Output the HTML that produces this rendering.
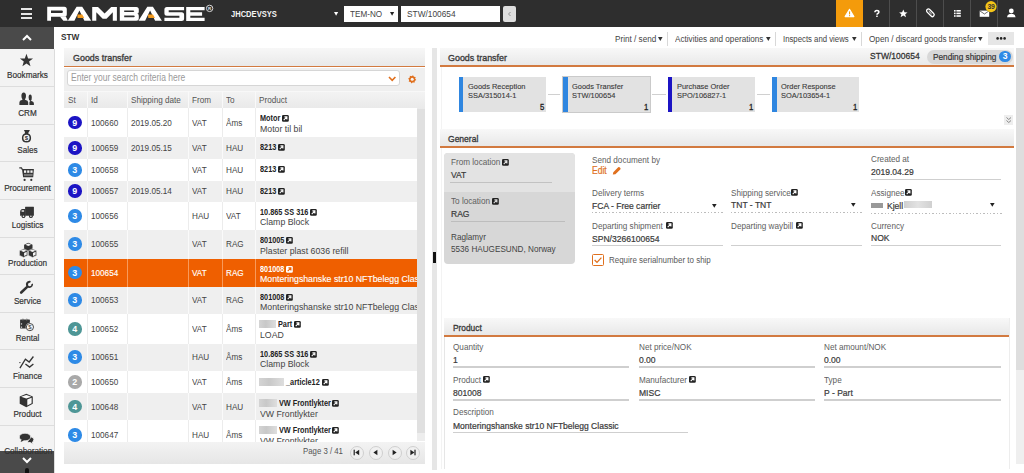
<!DOCTYPE html>
<html><head><meta charset="utf-8">
<style>
*{box-sizing:border-box;margin:0;padding:0}
html,body{width:1024px;height:473px;overflow:hidden;background:#fff;font-family:"Liberation Sans",sans-serif;font-size:9.6px;color:#333}
.a{position:absolute}
.t{position:absolute;white-space:nowrap;line-height:1}
svg{position:absolute;overflow:visible}
</style></head><body>

<div class="a" style="left:0px;top:0px;width:1024px;height:27px;background:#2e2e2e;"></div>
<div class="a" style="left:21px;top:8px;width:11px;height:2px;background:#e6e6e6;"></div>
<div class="a" style="left:21px;top:12.5px;width:11px;height:2px;background:#e6e6e6;"></div>
<div class="a" style="left:21px;top:17px;width:11px;height:2px;background:#e6e6e6;"></div>
<svg width="1024" height="27" style="left:0;top:0">
 <g fill="#fff" fill-rule="evenodd">
  <path d="M47.2,6.8 H64.3 Q66.8,6.8 66.8,9.3 V14.2 Q66.8,16.7 64.3,16.7 H51 V20.8 H47.2 Z M51,10.6 H61.8 Q62.9,10.6 62.9,11.85 Q62.9,13.1 61.8,13.1 H51 Z"/>
  <path d="M59.8,16.5 H65.8 L67.9,20.8 H63.4 Z"/>
  <path d="M67.8,20.8 L76.6,6.8 H82.2 L91.2,20.8 H84.4 L79.4,10.4 L74.4,20.8 Z"/>
  <path d="M92.2,6.9 H98 L104.6,13.6 L111.2,6.9 H116.9 V20.8 H112.8 V12.2 L106.5,18.8 H102.7 L96.3,12.2 V20.8 H92.2 Z"/>
  <path d="M119.8,6.9 H136.3 Q138.8,6.9 138.8,9.4 V11.8 Q138.8,13.8 137.3,13.85 Q138.8,13.9 138.8,15.8 V18.3 Q138.8,20.8 136.3,20.8 H119.8 Z M124.2,10.6 H133.2 Q134.2,10.6 134.2,11.35 Q134.2,12.1 133.2,12.1 H124.2 Z M124.2,15.5 H133.7 Q134.7,15.5 134.7,16.35 Q134.7,17.2 133.7,17.2 H124.2 Z"/>
  <path d="M138.5,20.8 L147.3,6.8 H152.9 L161.9,20.8 H155.1 L150.1,10.4 L145.1,20.8 Z"/>
  <path d="M166.9,7 H184.1 V10.3 H168.7 V12.2 H181.6 Q184.1,12.2 184.1,14.7 V18.5 Q184.1,21 181.6,21 H164.4 V17.7 H179.4 V15.8 H166.9 Q164.4,15.8 164.4,13.3 V9.5 Q164.4,7 166.9,7 Z"/>
  <path d="M186.2,7 H204.6 V10.3 H190.3 V12.2 H202.1 V15.7 H190.3 V17.7 H204.6 V21 H186.2 Z"/>
 </g>
 <polygon points="77.3,14.4 82.3,14.4 84.2,17.9 77.6,17.9" fill="#f39a1e"/>
 <polygon points="148,14.4 153,14.4 154.9,17.9 148.3,17.9" fill="#f39a1e"/>
 <circle cx="209.6" cy="8.4" r="3.2" fill="none" stroke="#e8e8e8" stroke-width="0.9"/>
 <text x="208.1" y="10" font-size="4.4" fill="#e8e8e8" font-family="Liberation Sans" font-weight="bold">R</text>
</svg>
<div class="t" style="left:231px;top:10.11px;font-size:9px;color:#f4f4f4;font-weight:bold;transform-origin:0 0;transform:scaleX(0.84);">JHCDEVSYS</div>
<svg width="5.2" height="4.8" style="left:333.5px;top:12px"><path d="M0,0 H4.2 L2.1,3.8 Z" fill="#fff"/></svg>
<div class="a" style="left:344.4px;top:6.2px;width:53.3px;height:15.7px;background:#fff;"></div>
<div class="t" style="left:350.3px;top:9.10px;font-size:9.6px;color:#444;transform-origin:0 0;transform:scaleX(0.85);">TEM-NO</div>
<svg width="5.2" height="4.8" style="left:389.8px;top:12px"><path d="M0,0 H4.2 L2.1,3.8 Z" fill="#222"/></svg>
<div class="a" style="left:401px;top:6.2px;width:98.7px;height:15.7px;background:#fff;"></div>
<div class="t" style="left:407px;top:9.00px;font-size:9.8px;color:#444;transform-origin:0 0;transform:scaleX(0.85);">STW/100654</div>
<div class="a" style="left:503.2px;top:6.2px;width:12.7px;height:15.7px;background:#dedede;border-radius:2px"></div>
<svg width="10" height="10" style="left:505px;top:9px"><path d="M5.5,3 L3.5,5 L5.5,7" stroke="#888" stroke-width="0.9" fill="none"/></svg>
<div class="a" style="left:835.7px;top:0px;width:27px;height:27px;background:#f49b0b;"></div>
<div class="a" style="left:888.8px;top:0px;width:1px;height:27px;background:#4d4d4d;"></div>
<div class="a" style="left:915.7px;top:0px;width:1px;height:27px;background:#4d4d4d;"></div>
<div class="a" style="left:942.8px;top:0px;width:1px;height:27px;background:#4d4d4d;"></div>
<div class="a" style="left:969.7px;top:0px;width:1px;height:27px;background:#4d4d4d;"></div>
<div class="a" style="left:997.2px;top:0px;width:1px;height:27px;background:#4d4d4d;"></div>
<svg width="1024" height="27" style="left:0;top:0">
 <path d="M849.5,9.3 L853.9,16.6 H845.1 Z" fill="#fff" stroke="#fff" stroke-width="1.1" stroke-linejoin="round"/>
 <rect x="849" y="11.4" width="1.1" height="3" fill="#f49b0b"/>
 <rect x="849" y="15.1" width="1.1" height="1.1" fill="#f49b0b"/>
 <path d="M874.9,12.2 Q874.9,10.4 876.9,10.4 Q878.9,10.4 878.9,12 Q878.9,13 877.8,13.5 Q877,13.9 877,14.8" fill="none" stroke="#fff" stroke-width="1.5"/>
 <rect x="876.2" y="15.6" width="1.5" height="1.4" fill="#fff"/>
 <path d="M903.3,9.4 L904.5,12.2 L907.5,12.4 L905.2,14.3 L906,17.2 L903.3,15.6 L900.6,17.2 L901.4,14.3 L899.1,12.4 L902.1,12.2 Z" fill="#fff"/>
 <g transform="rotate(-45 930.4 12.8)"><rect x="928.6" y="8.2" width="3.6" height="9.2" rx="1.8" fill="none" stroke="#fff" stroke-width="1.3"/><line x1="930.4" y1="10.4" x2="930.4" y2="14.6" stroke="#fff" stroke-width="0.9"/></g>
 <g fill="#fff"><rect x="954" y="10" width="1.6" height="1.6"/><rect x="956.4" y="10" width="4.4" height="1.6"/><rect x="954" y="12.6" width="1.6" height="1.6"/><rect x="956.4" y="12.6" width="4.4" height="1.6"/><rect x="954" y="15.2" width="1.6" height="1.6"/><rect x="956.4" y="15.2" width="4.4" height="1.6"/></g>
 <rect x="979.7" y="10.6" width="9.5" height="6.2" fill="#fff"/>
 <path d="M979.7,10.8 L984.45,14 L989.2,10.8" fill="none" stroke="#2e2e2e" stroke-width="0.7"/>
 <circle cx="991" cy="6.6" r="5.6" fill="#f5c518"/>
 <text x="987.6" y="9.1" font-size="6.8" font-weight="bold" fill="#333" font-family="Liberation Sans" letter-spacing="-0.3">39</text>
 <circle cx="1011.3" cy="11" r="2.4" fill="#fff"/>
 <path d="M1007,17.2 Q1007.3,14.2 1009.6,13.9 H1013 Q1015.3,14.2 1015.6,17.2 Z" fill="#fff"/>
</svg>
<div class="a" style="left:0px;top:27px;width:54px;height:21.5px;background:#4a4a4a;"></div>
<svg width="10" height="6" style="left:22px;top:34.5px"><path d="M1,5 L5,1 L9,5" fill="none" stroke="#fff" stroke-width="2"/></svg>
<div class="a" style="left:0px;top:48.5px;width:54px;height:403px;background:#f3f3f3;"></div>
<div class="a" style="left:54px;top:48.5px;width:1px;height:425px;background:#dcdcdc;"></div>
<div class="a" style="left:0px;top:450.5px;width:54px;height:23px;background:#4a4a4a;"></div>
<div class="a" style="left:0px;top:86.0px;width:54px;height:1px;background:#dddddd;"></div>
<svg width="20" height="20" style="left:17px;top:50.4px"><g transform="translate(10,10)" fill="#333" font-family="Liberation Sans"><path d="M-0.55,-6.20 L1.10,-1.57 L6.01,-1.43 L2.11,1.57 L3.51,6.28 L-0.55,3.50 L-4.61,6.28 L-3.21,1.57 L-7.11,-1.43 L-2.20,-1.57 Z"/></g></svg>
<div class="t" style="left:0px;top:69.97px;font-size:9.6px;color:#333;-webkit-text-stroke:0.2px #333;width:55px;text-align:center;transform-origin:50% 0;transform:scaleX(0.85);">Bookmarks</div>
<div class="a" style="left:0px;top:123.63px;width:54px;height:1px;background:#dddddd;"></div>
<svg width="20" height="20" style="left:17px;top:88.0px"><g transform="translate(10,10)" fill="#333" font-family="Liberation Sans"><path d="M-7.6,7.1 V4.6 Q-7.6,2.3 -5.2,2 L-4.4,1.6 Q-5.6,0.4 -5.6,-2 Q-5.6,-5.6 -3.3,-5.6 Q-1,-5.6 -1,-2 Q-1,0.4 -2.2,1.6 L-1.4,2 Q1.2,2.3 1.2,4.6 V7.1 Z"/><path d="M2.4,7.1 V4.4 Q2.4,3.4 3.4,3 Q1.6,2.4 1.6,-0.6 Q1.6,-3.6 3.2,-3.6 Q4.8,-3.6 4.8,-0.6 Q4.8,2.2 3.8,2.8 L5,3.3 Q6.9,3.8 6.9,5.4 V7.1 Z"/></g></svg>
<div class="t" style="left:0px;top:107.60px;font-size:9.6px;color:#333;-webkit-text-stroke:0.2px #333;width:55px;text-align:center;transform-origin:50% 0;transform:scaleX(0.85);">CRM</div>
<div class="a" style="left:0px;top:161.26px;width:54px;height:1px;background:#dddddd;"></div>
<svg width="20" height="20" style="left:17px;top:125.6px"><g transform="translate(10,10)" fill="#333" font-family="Liberation Sans"><path d="M-3.1,-6 H2.9 L2,-4.2 L1,-2.7 Q4.1,-1.4 4.1,2 Q4.1,6.5 -0.5,6.5 Q-5.1,6.5 -5.1,2 Q-5.1,-1.4 -2,-2.7 L-2.2,-4.2 Z"/><circle cx="-0.5" cy="1.9" r="3.1" fill="#f3f3f3"/><text x="-2.25" y="4.1" font-size="6" font-weight="bold" fill="#333">$</text></g></svg>
<div class="t" style="left:0px;top:145.23px;font-size:9.6px;color:#333;-webkit-text-stroke:0.2px #333;width:55px;text-align:center;transform-origin:50% 0;transform:scaleX(0.85);">Sales</div>
<div class="a" style="left:0px;top:198.89px;width:54px;height:1px;background:#dddddd;"></div>
<svg width="20" height="20" style="left:17px;top:163.3px"><g transform="translate(10,10)" fill="#333" font-family="Liberation Sans"><path d="M-7.7,-5.2 H-5.6 L-4.6,-3.4" fill="none" stroke="#333" stroke-width="1.2"/><path d="M-5,-3.9 H6.9 L6.2,4.2 H-3.9 Z"/><g fill="#f3f3f3"><rect x="-3" y="-2.6" width="2.2" height="2.4"/><rect x="0.2" y="-2.6" width="2.2" height="2.4"/><rect x="3.4" y="-2.6" width="2.2" height="2.4"/></g><rect x="-3" y="0.9" width="8.6" height="2.2" fill="#777"/><circle cx="-2.4" cy="6.9" r="1.1"/><circle cx="4.3" cy="6.9" r="1.1"/></g></svg>
<div class="t" style="left:0px;top:182.86px;font-size:9.6px;color:#333;-webkit-text-stroke:0.2px #333;width:55px;text-align:center;transform-origin:50% 0;transform:scaleX(0.85);">Procurement</div>
<div class="a" style="left:0px;top:236.52px;width:54px;height:1px;background:#dddddd;"></div>
<svg width="20" height="20" style="left:17px;top:200.9px"><g transform="translate(10,10)" fill="#333" font-family="Liberation Sans"><rect x="-1.9" y="-4.3" width="8.8" height="9.1" rx="0.4"/><path d="M-1.6,-1.9 H-4.4 Q-6.9,-1.6 -6.9,1.2 V4.8 H-1.6 Z"/><rect x="-5.4" y="-0.7" width="2.5" height="1.4" fill="#f3f3f3"/><circle cx="-3.5" cy="5.2" r="1.9"/><circle cx="3.9" cy="5.2" r="1.9"/><circle cx="-3.5" cy="5.2" r="0.8" fill="#f3f3f3"/><circle cx="3.9" cy="5.2" r="0.8" fill="#f3f3f3"/></g></svg>
<div class="t" style="left:0px;top:220.49px;font-size:9.6px;color:#333;-webkit-text-stroke:0.2px #333;width:55px;text-align:center;transform-origin:50% 0;transform:scaleX(0.85);">Logistics</div>
<div class="a" style="left:0px;top:274.15px;width:54px;height:1px;background:#dddddd;"></div>
<svg width="20" height="20" style="left:17px;top:238.5px"><g transform="translate(10,10)" fill="#333" font-family="Liberation Sans"><g transform="translate(0.3,0)"><path d="M1,-6.3 L5.2,-4.3 V0.6 L1,2.6 L-3.2,0.6 V-4.3 Z"/><path d="M-3.7,-0.2 L0.5,1.8 V6.4 L-3.7,8.4 L-7.9,6.4 V1.8 Z" stroke="#f3f3f3" stroke-width="0.6"/><path d="M5.2,-0.2 L9.4,1.8 V6.4 L5.2,8.4 L1,6.4 V1.8 Z" stroke="#f3f3f3" stroke-width="0.6"/><g fill="#f3f3f3"><path d="M-1.9,-4.3 L1,-5.6 L3.9,-4.3 L1,-3 Z"/><path d="M-6.6,1.8 L-3.7,0.5 L-0.8,1.8 L-3.7,3.1 Z"/><path d="M2.3,1.8 L5.2,0.5 L8.1,1.8 L5.2,3.1 Z"/><path d="M-3.2,4 L-0.6,2.8 V5.8 L-3.2,7 Z"/><path d="M5.7,4 L8.3,2.8 V5.8 L5.7,7 Z"/></g></g></g></svg>
<div class="t" style="left:0px;top:258.12px;font-size:9.6px;color:#333;-webkit-text-stroke:0.2px #333;width:55px;text-align:center;transform-origin:50% 0;transform:scaleX(0.85);">Production</div>
<div class="a" style="left:0px;top:311.78px;width:54px;height:1px;background:#dddddd;"></div>
<svg width="20" height="20" style="left:17px;top:276.2px"><g transform="translate(10,10)" fill="#333" font-family="Liberation Sans"><path d="M-5.8,6.5 L-0.6,1.6" stroke="#333" stroke-width="2.6" stroke-linecap="round" fill="none"/><path d="M-0.6,1.6 L0.8,0.2" stroke="#333" stroke-width="2" fill="none"/><path d="M6,-2.4 A3.6,3.6 0 1 1 3.8,-5 L3.2,-3.2 A1.7,1.7 0 1 0 4.4,-1.8 Z"/></g></svg>
<div class="t" style="left:0px;top:295.75px;font-size:9.6px;color:#333;-webkit-text-stroke:0.2px #333;width:55px;text-align:center;transform-origin:50% 0;transform:scaleX(0.85);">Service</div>
<div class="a" style="left:0px;top:349.41px;width:54px;height:1px;background:#dddddd;"></div>
<svg width="20" height="20" style="left:17px;top:313.8px"><g transform="translate(10,10)" fill="#333" font-family="Liberation Sans"><rect x="-6.9" y="-4.4" width="9.8" height="8.8" rx="0.5"/><rect x="-4.7" y="-5.2" width="1.2" height="1.6" fill="#333"/><rect x="-0.9" y="-5.2" width="1.2" height="1.6" fill="#333"/><g fill="#f3f3f3"><rect x="-4.5" y="-4.6" width="0.8" height="0.8"/><rect x="-0.7" y="-4.6" width="0.8" height="0.8"/><rect x="-6.1" y="-0.6" width="1.2" height="1.1"/><rect x="-6.1" y="2.6" width="1.2" height="1.1"/></g><circle cx="2.9" cy="3.1" r="4.3" fill="#f3f3f3"/><circle cx="2.9" cy="3.1" r="3.6" fill="#fafafa" stroke="#333" stroke-width="0.9"/><text x="1.3" y="5.3" font-size="6" fill="#333">$</text></g></svg>
<div class="t" style="left:0px;top:333.38px;font-size:9.6px;color:#333;-webkit-text-stroke:0.2px #333;width:55px;text-align:center;transform-origin:50% 0;transform:scaleX(0.85);">Rental</div>
<div class="a" style="left:0px;top:387.04px;width:54px;height:1px;background:#dddddd;"></div>
<svg width="20" height="20" style="left:17px;top:351.4px"><g transform="translate(10,10)" fill="#333" font-family="Liberation Sans"><path d="M-7.1,7.1 L-1.6,-1.8 L2.2,1 L6.4,-4.5" fill="none" stroke="#333" stroke-width="1.3"/><path d="M-1.6,2.9 L2.6,6.1 L6.4,2.9" fill="none" stroke="#333" stroke-width="1.3"/><circle cx="-7.1" cy="1.6" r="0.7"/></g></svg>
<div class="t" style="left:0px;top:371.01px;font-size:9.6px;color:#333;-webkit-text-stroke:0.2px #333;width:55px;text-align:center;transform-origin:50% 0;transform:scaleX(0.85);">Finance</div>
<div class="a" style="left:0px;top:424.67px;width:54px;height:1px;background:#dddddd;"></div>
<svg width="20" height="20" style="left:17px;top:389.0px"><g transform="translate(10,10)" fill="#333" font-family="Liberation Sans"><path d="M-0.7,-5.2 L5.8,-2.4 V4.8 L-0.7,8.2 L-7.3,4.8 V-2.4 Z"/><path d="M-0.7,-3.9 L4.4,-2.3 L-0.7,-0.4 L-5.9,-2.3 Z" fill="#fafafa"/><path d="M0.3,0.6 L4.6,-1.2 V4.2 L0.3,6.4 Z" fill="#fafafa"/></g></svg>
<div class="t" style="left:0px;top:408.64px;font-size:9.6px;color:#333;-webkit-text-stroke:0.2px #333;width:55px;text-align:center;transform-origin:50% 0;transform:scaleX(0.85);">Product</div>
<svg width="20" height="20" style="left:17px;top:426.7px"><g transform="translate(10,10)" fill="#333" font-family="Liberation Sans"><path d="M3.2,-0.4 Q6.9,0.2 6.9,2.6 Q6.9,4.2 5.4,5 L6.2,7.2 L3.4,5.6 Q1.4,5.6 0.4,5 Z" stroke="#f3f3f3" stroke-width="0.9"/><ellipse cx="-2" cy="0.05" rx="5.7" ry="3.8" stroke="#f3f3f3" stroke-width="0.7"/><path d="M-5.4,2.6 L-6.4,5 L-3,3.6 Z"/></g></svg>
<div class="t" style="left:0px;top:446.27px;font-size:9.6px;color:#333;-webkit-text-stroke:0.2px #333;width:55px;text-align:center;transform-origin:50% 0;transform:scaleX(0.85);">Collaboration</div>
<svg width="10" height="6" style="left:22px;top:457px"><path d="M1,1 L5,5 L9,1" fill="none" stroke="#fff" stroke-width="2"/></svg>
<div class="a" style="left:25px;top:468px;width:4px;height:5px;background:#111;border-radius:2px 2px 0 0"></div>
<div class="t" style="left:61px;top:32.86px;font-size:8.9px;color:#333;font-weight:bold;transform-origin:0 0;transform:scaleX(0.93);">STW</div>
<div class="t" style="left:614.6px;top:34.10px;font-size:9.6px;color:#444;transform-origin:0 0;transform:scaleX(0.85);">Print / send</div>
<svg width="5.6" height="5" style="left:658.4px;top:37.2px"><path d="M0,0 H4.6 L2.3,4 Z" fill="#333"/></svg>
<div class="a" style="left:667.2px;top:32.4px;width:1px;height:14px;background:#d8d8d8;"></div>
<div class="t" style="left:675.2px;top:34.10px;font-size:9.6px;color:#444;transform-origin:0 0;transform:scaleX(0.85);">Activities and operations</div>
<svg width="5.6" height="5" style="left:765.8px;top:37.2px"><path d="M0,0 H4.6 L2.3,4 Z" fill="#333"/></svg>
<div class="a" style="left:775.2px;top:32.4px;width:1px;height:14px;background:#d8d8d8;"></div>
<div class="t" style="left:782.6px;top:34.10px;font-size:9.6px;color:#444;transform-origin:0 0;transform:scaleX(0.81);">Inspects and views</div>
<svg width="5.6" height="5" style="left:851.8px;top:37.2px"><path d="M0,0 H4.6 L2.3,4 Z" fill="#333"/></svg>
<div class="a" style="left:860.8px;top:32.4px;width:1px;height:14px;background:#d8d8d8;"></div>
<div class="t" style="left:868.5px;top:34.10px;font-size:9.6px;color:#444;transform-origin:0 0;transform:scaleX(0.85);">Open / discard goods transfer</div>
<svg width="5.6" height="5" style="left:978.3px;top:37.2px"><path d="M0,0 H4.6 L2.3,4 Z" fill="#333"/></svg>
<div class="a" style="left:988.1px;top:32.1px;width:26.3px;height:12.5px;background:#e6e6e6;"></div>
<svg width="30" height="10" style="left:988px;top:34px"><circle cx="9.6" cy="4.4" r="1.3" fill="#222"/><circle cx="13.1" cy="4.4" r="1.3" fill="#222"/><circle cx="16.6" cy="4.4" r="1.3" fill="#222"/></svg>
<div class="a" style="left:64px;top:48px;width:361px;height:18.2px;background:linear-gradient(#f7f7f7,#e9e9e9);"></div>
<div class="t" style="left:73px;top:53.05px;font-size:9.7px;color:#3a3a3a;-webkit-text-stroke:0.35px #3a3a3a;transform-origin:0 0;transform:scaleX(0.92);">Goods transfer</div>
<div class="a" style="left:64px;top:65.6px;width:361px;height:1.8px;background:#d27a40;"></div>
<div class="a" style="left:64px;top:67.5px;width:361px;height:23.5px;background:#efefef;"></div>
<div class="a" style="left:67px;top:69.6px;width:333px;height:16.9px;background:#fff;border:1px solid #d6d6d6;border-radius:3px"></div>
<div class="t" style="left:71px;top:73.10px;font-size:10px;color:#9a9a9a;transform-origin:0 0;transform:scaleX(0.85);">Enter your search criteria here</div>
<svg width="10" height="7" style="left:387.5px;top:76px"><path d="M1,1 L4.2,4.4 L7.4,1" fill="none" stroke="#e0701e" stroke-width="1.6"/></svg>
<svg width="1024" height="100" style="left:0;top:0"><polygon points="416.32,80.12 414.69,80.97 414.53,82.79 412.79,82.24 411.38,83.42 410.53,81.79 408.71,81.63 409.26,79.89 408.08,78.48 409.71,77.63 409.87,75.81 411.61,76.36 413.02,75.18 413.87,76.81 415.69,76.97 415.14,78.71" fill="#e0701e"/><circle cx="412.2" cy="79.3" r="2.9" fill="#e0701e"/><circle cx="412.2" cy="79.3" r="1.5" fill="#f4f4f4"/></svg>
<div class="a" style="left:64px;top:91px;width:361px;height:17.5px;background:linear-gradient(#f3f3f3,#e9e9e9);border-top:1px solid #f8f8f8"></div>
<div class="a" style="left:86.5px;top:91px;width:1px;height:17.5px;background:#f9f9f9;"></div>
<div class="a" style="left:127.0px;top:91px;width:1px;height:17.5px;background:#f9f9f9;"></div>
<div class="a" style="left:188.0px;top:91px;width:1px;height:17.5px;background:#f9f9f9;"></div>
<div class="a" style="left:222.0px;top:91px;width:1px;height:17.5px;background:#f9f9f9;"></div>
<div class="a" style="left:255.0px;top:91px;width:1px;height:17.5px;background:#f9f9f9;"></div>
<div class="t" style="left:67.7px;top:95.10px;font-size:9.6px;color:#555;transform-origin:0 0;transform:scaleX(0.85);">St</div>
<div class="t" style="left:90.5px;top:95.10px;font-size:9.6px;color:#555;transform-origin:0 0;transform:scaleX(0.85);">Id</div>
<div class="t" style="left:130.8px;top:95.10px;font-size:9.6px;color:#555;transform-origin:0 0;transform:scaleX(0.85);">Shipping date</div>
<div class="t" style="left:191.7px;top:95.10px;font-size:9.6px;color:#555;transform-origin:0 0;transform:scaleX(0.85);">From</div>
<div class="t" style="left:226px;top:95.10px;font-size:9.6px;color:#555;transform-origin:0 0;transform:scaleX(0.85);">To</div>
<div class="t" style="left:258.7px;top:95.10px;font-size:9.6px;color:#555;transform-origin:0 0;transform:scaleX(0.85);">Product</div>
<div class="a" style="left:64px;top:108px;width:353px;height:333.8px;overflow:hidden">
<div class="a" style="left:0px;top:0px;width:354px;height:29px;background:#ffffff;"></div>
<div class="a" style="left:22.5px;top:0px;width:1px;height:29px;background:#ececec;"></div>
<div class="a" style="left:63.0px;top:0px;width:1px;height:29px;background:#ececec;"></div>
<div class="a" style="left:124.0px;top:0px;width:1px;height:29px;background:#ececec;"></div>
<div class="a" style="left:158.0px;top:0px;width:1px;height:29px;background:#ececec;"></div>
<div class="a" style="left:191.0px;top:0px;width:1px;height:29px;background:#ececec;"></div>
<div class="a" style="left:4.1px;top:7.7px;width:13.6px;height:13.6px;background:#1c14c4;border-radius:50%;"></div>
<div class="t" style="left:4.1px;top:9.71px;font-size:9.4px;color:#fff;font-weight:bold;width:13.6px;text-align:center;transform-origin:50% 0;transform:scaleX(0.95);">9</div>
<div class="t" style="left:26.5px;top:9.60px;font-size:9.6px;color:#444;transform-origin:0 0;transform:scaleX(0.85);">100660</div>
<div class="t" style="left:66.80000000000001px;top:9.60px;font-size:9.6px;color:#444;transform-origin:0 0;transform:scaleX(0.85);">2019.05.20</div>
<div class="t" style="left:127.69999999999999px;top:9.60px;font-size:9.6px;color:#444;transform-origin:0 0;transform:scaleX(0.85);">VAT</div>
<div class="t" style="left:162px;top:9.60px;font-size:9.6px;color:#444;transform-origin:0 0;transform:scaleX(0.85);">Åms</div>
<div class="t" style="left:196px;top:6.11px;font-size:8.6px;color:#222;font-weight:bold;transform-origin:0 0;transform:scaleX(0.85);">Motor</div>
<svg width="8" height="8" style="left:218.1px;top:7.10px"><g transform="scale(1.000)"><rect x="0" y="0" width="6.8" height="6.8" rx="1.3" fill="#222"/><path d="M1.7,5.1 L4.7,2.1 M2.4,1.9 H4.9 V4.4" stroke="#ffffff" stroke-width="1.1" fill="none"/></g></svg>
<div class="t" style="left:196px;top:15.93px;font-size:9.95px;color:#444;transform-origin:0 0;transform:scaleX(0.88);">Motor til bil</div>
<div class="a" style="left:0px;top:29px;width:354px;height:21.5px;background:#efefef;"></div>
<div class="a" style="left:22.5px;top:29px;width:1px;height:21.5px;background:#fafafa;"></div>
<div class="a" style="left:63.0px;top:29px;width:1px;height:21.5px;background:#fafafa;"></div>
<div class="a" style="left:124.0px;top:29px;width:1px;height:21.5px;background:#fafafa;"></div>
<div class="a" style="left:158.0px;top:29px;width:1px;height:21.5px;background:#fafafa;"></div>
<div class="a" style="left:191.0px;top:29px;width:1px;height:21.5px;background:#fafafa;"></div>
<div class="a" style="left:4.1px;top:32.95px;width:13.6px;height:13.6px;background:#1c14c4;border-radius:50%;"></div>
<div class="t" style="left:4.1px;top:34.96px;font-size:9.4px;color:#fff;font-weight:bold;width:13.6px;text-align:center;transform-origin:50% 0;transform:scaleX(0.95);">9</div>
<div class="t" style="left:26.5px;top:34.85px;font-size:9.6px;color:#444;transform-origin:0 0;transform:scaleX(0.85);">100659</div>
<div class="t" style="left:66.80000000000001px;top:34.85px;font-size:9.6px;color:#444;transform-origin:0 0;transform:scaleX(0.85);">2019.05.15</div>
<div class="t" style="left:127.69999999999999px;top:34.85px;font-size:9.6px;color:#444;transform-origin:0 0;transform:scaleX(0.85);">VAT</div>
<div class="t" style="left:162px;top:34.85px;font-size:9.6px;color:#444;transform-origin:0 0;transform:scaleX(0.85);">HAU</div>
<div class="t" style="left:196px;top:35.36px;font-size:8.6px;color:#222;font-weight:bold;transform-origin:0 0;transform:scaleX(0.85);">8213</div>
<svg width="8" height="8" style="left:214.06px;top:36.35px"><g transform="scale(1.000)"><rect x="0" y="0" width="6.8" height="6.8" rx="1.3" fill="#222"/><path d="M1.7,5.1 L4.7,2.1 M2.4,1.9 H4.9 V4.4" stroke="#efefef" stroke-width="1.1" fill="none"/></g></svg>
<div class="a" style="left:0px;top:50.5px;width:354px;height:22.5px;background:#ffffff;"></div>
<div class="a" style="left:22.5px;top:50.5px;width:1px;height:22.5px;background:#ececec;"></div>
<div class="a" style="left:63.0px;top:50.5px;width:1px;height:22.5px;background:#ececec;"></div>
<div class="a" style="left:124.0px;top:50.5px;width:1px;height:22.5px;background:#ececec;"></div>
<div class="a" style="left:158.0px;top:50.5px;width:1px;height:22.5px;background:#ececec;"></div>
<div class="a" style="left:191.0px;top:50.5px;width:1px;height:22.5px;background:#ececec;"></div>
<div class="a" style="left:4.1px;top:54.95px;width:13.6px;height:13.6px;background:#2e8ae6;border-radius:50%;"></div>
<div class="t" style="left:4.1px;top:56.96px;font-size:9.4px;color:#fff;font-weight:bold;width:13.6px;text-align:center;transform-origin:50% 0;transform:scaleX(0.95);">3</div>
<div class="t" style="left:26.5px;top:56.85px;font-size:9.6px;color:#444;transform-origin:0 0;transform:scaleX(0.85);">100658</div>
<div class="t" style="left:127.69999999999999px;top:56.85px;font-size:9.6px;color:#444;transform-origin:0 0;transform:scaleX(0.85);">VAT</div>
<div class="t" style="left:162px;top:56.85px;font-size:9.6px;color:#444;transform-origin:0 0;transform:scaleX(0.85);">HAU</div>
<div class="t" style="left:196px;top:57.36px;font-size:8.6px;color:#222;font-weight:bold;transform-origin:0 0;transform:scaleX(0.85);">8213</div>
<svg width="8" height="8" style="left:214.06px;top:58.35px"><g transform="scale(1.000)"><rect x="0" y="0" width="6.8" height="6.8" rx="1.3" fill="#222"/><path d="M1.7,5.1 L4.7,2.1 M2.4,1.9 H4.9 V4.4" stroke="#ffffff" stroke-width="1.1" fill="none"/></g></svg>
<div class="a" style="left:0px;top:73px;width:354px;height:20.5px;background:#efefef;"></div>
<div class="a" style="left:22.5px;top:73px;width:1px;height:20.5px;background:#fafafa;"></div>
<div class="a" style="left:63.0px;top:73px;width:1px;height:20.5px;background:#fafafa;"></div>
<div class="a" style="left:124.0px;top:73px;width:1px;height:20.5px;background:#fafafa;"></div>
<div class="a" style="left:158.0px;top:73px;width:1px;height:20.5px;background:#fafafa;"></div>
<div class="a" style="left:191.0px;top:73px;width:1px;height:20.5px;background:#fafafa;"></div>
<div class="a" style="left:4.1px;top:76.45px;width:13.6px;height:13.6px;background:#1c14c4;border-radius:50%;"></div>
<div class="t" style="left:4.1px;top:78.46px;font-size:9.4px;color:#fff;font-weight:bold;width:13.6px;text-align:center;transform-origin:50% 0;transform:scaleX(0.95);">9</div>
<div class="t" style="left:26.5px;top:78.35px;font-size:9.6px;color:#444;transform-origin:0 0;transform:scaleX(0.85);">100657</div>
<div class="t" style="left:66.80000000000001px;top:78.35px;font-size:9.6px;color:#444;transform-origin:0 0;transform:scaleX(0.85);">2019.05.14</div>
<div class="t" style="left:127.69999999999999px;top:78.35px;font-size:9.6px;color:#444;transform-origin:0 0;transform:scaleX(0.85);">VAT</div>
<div class="t" style="left:162px;top:78.35px;font-size:9.6px;color:#444;transform-origin:0 0;transform:scaleX(0.85);">HAU</div>
<div class="t" style="left:196px;top:78.86px;font-size:8.6px;color:#222;font-weight:bold;transform-origin:0 0;transform:scaleX(0.85);">8213</div>
<svg width="8" height="8" style="left:214.06px;top:79.85px"><g transform="scale(1.000)"><rect x="0" y="0" width="6.8" height="6.8" rx="1.3" fill="#222"/><path d="M1.7,5.1 L4.7,2.1 M2.4,1.9 H4.9 V4.4" stroke="#efefef" stroke-width="1.1" fill="none"/></g></svg>
<div class="a" style="left:0px;top:93.5px;width:354px;height:28.5px;background:#ffffff;"></div>
<div class="a" style="left:22.5px;top:93.5px;width:1px;height:28.5px;background:#ececec;"></div>
<div class="a" style="left:63.0px;top:93.5px;width:1px;height:28.5px;background:#ececec;"></div>
<div class="a" style="left:124.0px;top:93.5px;width:1px;height:28.5px;background:#ececec;"></div>
<div class="a" style="left:158.0px;top:93.5px;width:1px;height:28.5px;background:#ececec;"></div>
<div class="a" style="left:191.0px;top:93.5px;width:1px;height:28.5px;background:#ececec;"></div>
<div class="a" style="left:4.1px;top:100.95px;width:13.6px;height:13.6px;background:#2e8ae6;border-radius:50%;"></div>
<div class="t" style="left:4.1px;top:102.96px;font-size:9.4px;color:#fff;font-weight:bold;width:13.6px;text-align:center;transform-origin:50% 0;transform:scaleX(0.95);">3</div>
<div class="t" style="left:26.5px;top:102.85px;font-size:9.6px;color:#444;transform-origin:0 0;transform:scaleX(0.85);">100656</div>
<div class="t" style="left:127.69999999999999px;top:102.85px;font-size:9.6px;color:#444;transform-origin:0 0;transform:scaleX(0.85);">HAU</div>
<div class="t" style="left:162px;top:102.85px;font-size:9.6px;color:#444;transform-origin:0 0;transform:scaleX(0.85);">VAT</div>
<div class="t" style="left:196px;top:99.61px;font-size:8.6px;color:#222;font-weight:bold;transform-origin:0 0;transform:scaleX(0.85);">10.865 SS 316</div>
<svg width="8" height="8" style="left:246.16px;top:100.60px"><g transform="scale(1.000)"><rect x="0" y="0" width="6.8" height="6.8" rx="1.3" fill="#222"/><path d="M1.7,5.1 L4.7,2.1 M2.4,1.9 H4.9 V4.4" stroke="#ffffff" stroke-width="1.1" fill="none"/></g></svg>
<div class="t" style="left:196px;top:109.43px;font-size:9.95px;color:#444;transform-origin:0 0;transform:scaleX(0.88);">Clamp Block</div>
<div class="a" style="left:0px;top:122px;width:354px;height:28.5px;background:#efefef;"></div>
<div class="a" style="left:22.5px;top:122px;width:1px;height:28.5px;background:#fafafa;"></div>
<div class="a" style="left:63.0px;top:122px;width:1px;height:28.5px;background:#fafafa;"></div>
<div class="a" style="left:124.0px;top:122px;width:1px;height:28.5px;background:#fafafa;"></div>
<div class="a" style="left:158.0px;top:122px;width:1px;height:28.5px;background:#fafafa;"></div>
<div class="a" style="left:191.0px;top:122px;width:1px;height:28.5px;background:#fafafa;"></div>
<div class="a" style="left:4.1px;top:129.45px;width:13.6px;height:13.6px;background:#2e8ae6;border-radius:50%;"></div>
<div class="t" style="left:4.1px;top:131.46px;font-size:9.4px;color:#fff;font-weight:bold;width:13.6px;text-align:center;transform-origin:50% 0;transform:scaleX(0.95);">3</div>
<div class="t" style="left:26.5px;top:131.35px;font-size:9.6px;color:#444;transform-origin:0 0;transform:scaleX(0.85);">100655</div>
<div class="t" style="left:127.69999999999999px;top:131.35px;font-size:9.6px;color:#444;transform-origin:0 0;transform:scaleX(0.85);">VAT</div>
<div class="t" style="left:162px;top:131.35px;font-size:9.6px;color:#444;transform-origin:0 0;transform:scaleX(0.85);">RAG</div>
<div class="t" style="left:196px;top:128.11px;font-size:8.6px;color:#222;font-weight:bold;transform-origin:0 0;transform:scaleX(0.85);">801005</div>
<svg width="8" height="8" style="left:222.19px;top:129.10px"><g transform="scale(1.000)"><rect x="0" y="0" width="6.8" height="6.8" rx="1.3" fill="#222"/><path d="M1.7,5.1 L4.7,2.1 M2.4,1.9 H4.9 V4.4" stroke="#efefef" stroke-width="1.1" fill="none"/></g></svg>
<div class="t" style="left:196px;top:137.93px;font-size:9.95px;color:#444;transform-origin:0 0;transform:scaleX(0.88);">Plaster plast 6036 refill</div>
<div class="a" style="left:0px;top:150.5px;width:354px;height:28.0px;background:#ef5f00;"></div>
<div class="a" style="left:22.5px;top:150.5px;width:1px;height:28.0px;background:#f89a5a;"></div>
<div class="a" style="left:63.0px;top:150.5px;width:1px;height:28.0px;background:#f89a5a;"></div>
<div class="a" style="left:124.0px;top:150.5px;width:1px;height:28.0px;background:#f89a5a;"></div>
<div class="a" style="left:158.0px;top:150.5px;width:1px;height:28.0px;background:#f89a5a;"></div>
<div class="a" style="left:191.0px;top:150.5px;width:1px;height:28.0px;background:#f89a5a;"></div>
<div class="a" style="left:4.1px;top:157.7px;width:13.6px;height:13.6px;background:#2e8ae6;border-radius:50%;"></div>
<div class="t" style="left:4.1px;top:159.71px;font-size:9.4px;color:#fff;font-weight:bold;width:13.6px;text-align:center;transform-origin:50% 0;transform:scaleX(0.95);">3</div>
<div class="t" style="left:26.5px;top:159.60px;font-size:9.6px;color:#fff;-webkit-text-stroke:0.15px #fff;transform-origin:0 0;transform:scaleX(0.85);">100654</div>
<div class="t" style="left:127.69999999999999px;top:159.60px;font-size:9.6px;color:#fff;-webkit-text-stroke:0.15px #fff;transform-origin:0 0;transform:scaleX(0.85);">VAT</div>
<div class="t" style="left:162px;top:159.60px;font-size:9.6px;color:#fff;-webkit-text-stroke:0.15px #fff;transform-origin:0 0;transform:scaleX(0.85);">RAG</div>
<div class="t" style="left:196px;top:156.61px;font-size:8.6px;color:#fff;font-weight:bold;transform-origin:0 0;transform:scaleX(0.85);">801008</div>
<svg width="8" height="8" style="left:222.19px;top:157.60px"><g transform="scale(1.000)"><rect x="0" y="0" width="6.8" height="6.8" rx="1.3" fill="#fff"/><path d="M1.7,5.1 L4.7,2.1 M2.4,1.9 H4.9 V4.4" stroke="#ef5f00" stroke-width="1.1" fill="none"/></g></svg>
<div class="t" style="left:196px;top:166.43px;font-size:9.95px;color:#fff;-webkit-text-stroke:0.15px #fff;transform-origin:0 0;transform:scaleX(0.88);">Monteringshanske str10 NFTbelegg Classic</div>
<div class="a" style="left:0px;top:178.5px;width:354px;height:27.5px;background:#efefef;"></div>
<div class="a" style="left:22.5px;top:178.5px;width:1px;height:27.5px;background:#fafafa;"></div>
<div class="a" style="left:63.0px;top:178.5px;width:1px;height:27.5px;background:#fafafa;"></div>
<div class="a" style="left:124.0px;top:178.5px;width:1px;height:27.5px;background:#fafafa;"></div>
<div class="a" style="left:158.0px;top:178.5px;width:1px;height:27.5px;background:#fafafa;"></div>
<div class="a" style="left:191.0px;top:178.5px;width:1px;height:27.5px;background:#fafafa;"></div>
<div class="a" style="left:4.1px;top:185.45px;width:13.6px;height:13.6px;background:#2e8ae6;border-radius:50%;"></div>
<div class="t" style="left:4.1px;top:187.46px;font-size:9.4px;color:#fff;font-weight:bold;width:13.6px;text-align:center;transform-origin:50% 0;transform:scaleX(0.95);">3</div>
<div class="t" style="left:26.5px;top:187.35px;font-size:9.6px;color:#444;transform-origin:0 0;transform:scaleX(0.85);">100653</div>
<div class="t" style="left:127.69999999999999px;top:187.35px;font-size:9.6px;color:#444;transform-origin:0 0;transform:scaleX(0.85);">VAT</div>
<div class="t" style="left:162px;top:187.35px;font-size:9.6px;color:#444;transform-origin:0 0;transform:scaleX(0.85);">RAG</div>
<div class="t" style="left:196px;top:184.61px;font-size:8.6px;color:#222;font-weight:bold;transform-origin:0 0;transform:scaleX(0.85);">801008</div>
<svg width="8" height="8" style="left:222.19px;top:185.60px"><g transform="scale(1.000)"><rect x="0" y="0" width="6.8" height="6.8" rx="1.3" fill="#222"/><path d="M1.7,5.1 L4.7,2.1 M2.4,1.9 H4.9 V4.4" stroke="#efefef" stroke-width="1.1" fill="none"/></g></svg>
<div class="t" style="left:196px;top:194.43px;font-size:9.95px;color:#444;transform-origin:0 0;transform:scaleX(0.88);">Monteringshanske str10 NFTbelegg Classic</div>
<div class="a" style="left:0px;top:206px;width:354px;height:29.5px;background:#ffffff;"></div>
<div class="a" style="left:22.5px;top:206px;width:1px;height:29.5px;background:#ececec;"></div>
<div class="a" style="left:63.0px;top:206px;width:1px;height:29.5px;background:#ececec;"></div>
<div class="a" style="left:124.0px;top:206px;width:1px;height:29.5px;background:#ececec;"></div>
<div class="a" style="left:158.0px;top:206px;width:1px;height:29.5px;background:#ececec;"></div>
<div class="a" style="left:191.0px;top:206px;width:1px;height:29.5px;background:#ececec;"></div>
<div class="a" style="left:4.1px;top:213.95px;width:13.6px;height:13.6px;background:#4e9696;border-radius:50%;"></div>
<div class="t" style="left:4.1px;top:215.96px;font-size:9.4px;color:#fff;font-weight:bold;width:13.6px;text-align:center;transform-origin:50% 0;transform:scaleX(0.95);">4</div>
<div class="t" style="left:26.5px;top:215.85px;font-size:9.6px;color:#444;transform-origin:0 0;transform:scaleX(0.85);">100652</div>
<div class="t" style="left:127.69999999999999px;top:215.85px;font-size:9.6px;color:#444;transform-origin:0 0;transform:scaleX(0.85);">VAT</div>
<div class="t" style="left:162px;top:215.85px;font-size:9.6px;color:#444;transform-origin:0 0;transform:scaleX(0.85);">Åms</div>
<div class="a" style="left:195px;top:212.2px;width:17px;height:8px;background:linear-gradient(90deg,#d4d4d4,#c8c8c8 40%,#dedede);"></div>
<div class="t" style="left:214px;top:212.11px;font-size:8.6px;color:#222;font-weight:bold;transform-origin:0 0;transform:scaleX(0.85);">Part</div>
<svg width="8" height="8" style="left:230.02px;top:213.10px"><g transform="scale(1.000)"><rect x="0" y="0" width="6.8" height="6.8" rx="1.3" fill="#222"/><path d="M1.7,5.1 L4.7,2.1 M2.4,1.9 H4.9 V4.4" stroke="#ffffff" stroke-width="1.1" fill="none"/></g></svg>
<div class="t" style="left:196px;top:221.93px;font-size:9.95px;color:#444;transform-origin:0 0;transform:scaleX(0.88);">LOAD</div>
<div class="a" style="left:0px;top:235.5px;width:354px;height:27.5px;background:#efefef;"></div>
<div class="a" style="left:22.5px;top:235.5px;width:1px;height:27.5px;background:#fafafa;"></div>
<div class="a" style="left:63.0px;top:235.5px;width:1px;height:27.5px;background:#fafafa;"></div>
<div class="a" style="left:124.0px;top:235.5px;width:1px;height:27.5px;background:#fafafa;"></div>
<div class="a" style="left:158.0px;top:235.5px;width:1px;height:27.5px;background:#fafafa;"></div>
<div class="a" style="left:191.0px;top:235.5px;width:1px;height:27.5px;background:#fafafa;"></div>
<div class="a" style="left:4.1px;top:242.45px;width:13.6px;height:13.6px;background:#2e8ae6;border-radius:50%;"></div>
<div class="t" style="left:4.1px;top:244.46px;font-size:9.4px;color:#fff;font-weight:bold;width:13.6px;text-align:center;transform-origin:50% 0;transform:scaleX(0.95);">3</div>
<div class="t" style="left:26.5px;top:244.35px;font-size:9.6px;color:#444;transform-origin:0 0;transform:scaleX(0.85);">100651</div>
<div class="t" style="left:127.69999999999999px;top:244.35px;font-size:9.6px;color:#444;transform-origin:0 0;transform:scaleX(0.85);">HAU</div>
<div class="t" style="left:162px;top:244.35px;font-size:9.6px;color:#444;transform-origin:0 0;transform:scaleX(0.85);">Åms</div>
<div class="t" style="left:196px;top:241.61px;font-size:8.6px;color:#222;font-weight:bold;transform-origin:0 0;transform:scaleX(0.85);">10.865 SS 316</div>
<svg width="8" height="8" style="left:246.16px;top:242.60px"><g transform="scale(1.000)"><rect x="0" y="0" width="6.8" height="6.8" rx="1.3" fill="#222"/><path d="M1.7,5.1 L4.7,2.1 M2.4,1.9 H4.9 V4.4" stroke="#efefef" stroke-width="1.1" fill="none"/></g></svg>
<div class="t" style="left:196px;top:251.43px;font-size:9.95px;color:#444;transform-origin:0 0;transform:scaleX(0.88);">Clamp Block</div>
<div class="a" style="left:0px;top:263px;width:354px;height:22px;background:#ffffff;"></div>
<div class="a" style="left:22.5px;top:263px;width:1px;height:22px;background:#ececec;"></div>
<div class="a" style="left:63.0px;top:263px;width:1px;height:22px;background:#ececec;"></div>
<div class="a" style="left:124.0px;top:263px;width:1px;height:22px;background:#ececec;"></div>
<div class="a" style="left:158.0px;top:263px;width:1px;height:22px;background:#ececec;"></div>
<div class="a" style="left:191.0px;top:263px;width:1px;height:22px;background:#ececec;"></div>
<div class="a" style="left:4.1px;top:267.2px;width:13.6px;height:13.6px;background:#a9a9a9;border-radius:50%;"></div>
<div class="t" style="left:4.1px;top:269.21px;font-size:9.4px;color:#fff;font-weight:bold;width:13.6px;text-align:center;transform-origin:50% 0;transform:scaleX(0.95);">2</div>
<div class="t" style="left:26.5px;top:269.10px;font-size:9.6px;color:#444;transform-origin:0 0;transform:scaleX(0.85);">100650</div>
<div class="t" style="left:127.69999999999999px;top:269.10px;font-size:9.6px;color:#444;transform-origin:0 0;transform:scaleX(0.85);">VAT</div>
<div class="t" style="left:162px;top:269.10px;font-size:9.6px;color:#444;transform-origin:0 0;transform:scaleX(0.85);">Åms</div>
<div class="a" style="left:195px;top:269.7px;width:25px;height:8px;background:linear-gradient(90deg,#d4d4d4,#c8c8c8 40%,#dedede);"></div>
<div class="t" style="left:222px;top:269.61px;font-size:8.6px;color:#222;font-weight:bold;transform-origin:0 0;transform:scaleX(0.85);">_article12</div>
<svg width="8" height="8" style="left:257.53px;top:270.60px"><g transform="scale(1.000)"><rect x="0" y="0" width="6.8" height="6.8" rx="1.3" fill="#222"/><path d="M1.7,5.1 L4.7,2.1 M2.4,1.9 H4.9 V4.4" stroke="#ffffff" stroke-width="1.1" fill="none"/></g></svg>
<div class="a" style="left:0px;top:285px;width:354px;height:27px;background:#efefef;"></div>
<div class="a" style="left:22.5px;top:285px;width:1px;height:27px;background:#fafafa;"></div>
<div class="a" style="left:63.0px;top:285px;width:1px;height:27px;background:#fafafa;"></div>
<div class="a" style="left:124.0px;top:285px;width:1px;height:27px;background:#fafafa;"></div>
<div class="a" style="left:158.0px;top:285px;width:1px;height:27px;background:#fafafa;"></div>
<div class="a" style="left:191.0px;top:285px;width:1px;height:27px;background:#fafafa;"></div>
<div class="a" style="left:4.1px;top:291.7px;width:13.6px;height:13.6px;background:#4e9696;border-radius:50%;"></div>
<div class="t" style="left:4.1px;top:293.71px;font-size:9.4px;color:#fff;font-weight:bold;width:13.6px;text-align:center;transform-origin:50% 0;transform:scaleX(0.95);">4</div>
<div class="t" style="left:26.5px;top:293.60px;font-size:9.6px;color:#444;transform-origin:0 0;transform:scaleX(0.85);">100648</div>
<div class="t" style="left:127.69999999999999px;top:293.60px;font-size:9.6px;color:#444;transform-origin:0 0;transform:scaleX(0.85);">VAT</div>
<div class="t" style="left:162px;top:293.60px;font-size:9.6px;color:#444;transform-origin:0 0;transform:scaleX(0.85);">HAU</div>
<div class="a" style="left:195px;top:291.2px;width:17.5px;height:8px;background:linear-gradient(90deg,#d4d4d4,#c8c8c8 40%,#dedede);"></div>
<div class="t" style="left:214.5px;top:291.11px;font-size:8.6px;color:#222;font-weight:bold;transform-origin:0 0;transform:scaleX(0.85);">VW Frontlykter</div>
<svg width="8" height="8" style="left:268.29px;top:292.10px"><g transform="scale(1.000)"><rect x="0" y="0" width="6.8" height="6.8" rx="1.3" fill="#222"/><path d="M1.7,5.1 L4.7,2.1 M2.4,1.9 H4.9 V4.4" stroke="#efefef" stroke-width="1.1" fill="none"/></g></svg>
<div class="t" style="left:196px;top:300.93px;font-size:9.95px;color:#444;transform-origin:0 0;transform:scaleX(0.88);">VW Frontlykter</div>
<div class="a" style="left:0px;top:312px;width:354px;height:30px;background:#ffffff;"></div>
<div class="a" style="left:22.5px;top:312px;width:1px;height:30px;background:#ececec;"></div>
<div class="a" style="left:63.0px;top:312px;width:1px;height:30px;background:#ececec;"></div>
<div class="a" style="left:124.0px;top:312px;width:1px;height:30px;background:#ececec;"></div>
<div class="a" style="left:158.0px;top:312px;width:1px;height:30px;background:#ececec;"></div>
<div class="a" style="left:191.0px;top:312px;width:1px;height:30px;background:#ececec;"></div>
<div class="a" style="left:4.1px;top:320.2px;width:13.6px;height:13.6px;background:#2e8ae6;border-radius:50%;"></div>
<div class="t" style="left:4.1px;top:322.21px;font-size:9.4px;color:#fff;font-weight:bold;width:13.6px;text-align:center;transform-origin:50% 0;transform:scaleX(0.95);">3</div>
<div class="t" style="left:26.5px;top:322.10px;font-size:9.6px;color:#444;transform-origin:0 0;transform:scaleX(0.85);">100647</div>
<div class="t" style="left:127.69999999999999px;top:322.10px;font-size:9.6px;color:#444;transform-origin:0 0;transform:scaleX(0.85);">HAU</div>
<div class="t" style="left:162px;top:322.10px;font-size:9.6px;color:#444;transform-origin:0 0;transform:scaleX(0.85);">Åms</div>
<div class="a" style="left:195px;top:318.2px;width:17.5px;height:8px;background:linear-gradient(90deg,#d4d4d4,#c8c8c8 40%,#dedede);"></div>
<div class="t" style="left:214.5px;top:318.11px;font-size:8.6px;color:#222;font-weight:bold;transform-origin:0 0;transform:scaleX(0.85);">VW Frontlykter</div>
<svg width="8" height="8" style="left:268.29px;top:319.10px"><g transform="scale(1.000)"><rect x="0" y="0" width="6.8" height="6.8" rx="1.3" fill="#222"/><path d="M1.7,5.1 L4.7,2.1 M2.4,1.9 H4.9 V4.4" stroke="#ffffff" stroke-width="1.1" fill="none"/></g></svg>
<div class="t" style="left:196px;top:327.93px;font-size:9.95px;color:#444;transform-origin:0 0;transform:scaleX(0.88);">VW Frontlykter</div>
</div>
<div class="a" style="left:417px;top:108.5px;width:8px;height:332.5px;background:#ededed;"></div>
<div class="a" style="left:417px;top:108.5px;width:8px;height:324.5px;background:#e0e0e0;"></div>
<div class="a" style="left:64px;top:441.8px;width:361px;height:22.2px;background:linear-gradient(#f3f3f3,#e6e6e6);"></div>
<div class="t" style="left:302.7px;top:447.31px;font-size:9.2px;color:#555;transform-origin:0 0;transform:scaleX(0.85);">Page 3 / 41</div>
<div class="a" style="left:349.6px;top:445.5px;width:14px;height:14px;background:#f0f0f0;border-radius:50%;border:1px solid #cfcfcf"></div>
<div class="a" style="left:368.6px;top:445.5px;width:14px;height:14px;background:#f0f0f0;border-radius:50%;border:1px solid #cfcfcf"></div>
<div class="a" style="left:387.5px;top:445.5px;width:14px;height:14px;background:#f0f0f0;border-radius:50%;border:1px solid #cfcfcf"></div>
<div class="a" style="left:406px;top:445.5px;width:14px;height:14px;background:#f0f0f0;border-radius:50%;border:1px solid #cfcfcf"></div>
<svg width="1024" height="473" style="left:0;top:0"><g fill="#222"><rect x="353.6" y="449.7" width="1.2" height="5.6"/><path d="M359.2,449.7 V455.3 L355.2,452.5 Z"/><path d="M377.4,449.7 V455.3 L373.4,452.5 Z"/><path d="M392.6,449.7 V455.3 L396.6,452.5 Z"/><path d="M410.4,449.7 V455.3 L414.4,452.5 Z"/><rect x="414.4" y="449.7" width="1.2" height="5.6"/></g></svg>
<div class="a" style="left:432.4px;top:48px;width:4.3px;height:421.5px;background:#e6e6e6;"></div>
<div class="a" style="left:441px;top:48px;width:1px;height:421px;background:#f3f3f3;"></div>
<div class="a" style="left:433.3px;top:252.2px;width:2.6px;height:10.6px;background:#111;"></div>
<div class="a" style="left:440px;top:48px;width:574px;height:17.5px;background:linear-gradient(#f8f8f8,#e8e8e8);"></div>
<div class="t" style="left:448.2px;top:52.65px;font-size:9.7px;color:#3a3a3a;-webkit-text-stroke:0.35px #3a3a3a;transform-origin:0 0;transform:scaleX(0.92);">Goods transfer</div>
<div class="t" style="left:870px;top:51.20px;font-size:9.8px;color:#333;-webkit-text-stroke:0.3px #333;transform-origin:0 0;transform:scaleX(0.87);">STW/100654</div>
<div class="a" style="left:927px;top:49.6px;width:85.5px;height:14px;background:#d8d8d8;border-radius:7px"></div>
<div class="t" style="left:933px;top:51.70px;font-size:9.6px;color:#333;-webkit-text-stroke:0.2px #333;transform-origin:0 0;transform:scaleX(0.86);">Pending shipping</div>
<div class="a" style="left:999.4px;top:50.8px;width:11.6px;height:11.6px;background:#2e8ae6;border-radius:50%"></div>
<div class="t" style="left:999.4px;top:52.21px;font-size:8.6px;color:#fff;font-weight:bold;width:11.6px;text-align:center;transform-origin:50% 0;">3</div>
<div class="a" style="left:440px;top:65.4px;width:573.6px;height:1.8px;background:#d27a40;"></div>
<div class="a" style="left:458.9px;top:76.7px;width:87px;height:35.8px;background:#e2e2e2;"></div>
<div class="a" style="left:458.9px;top:76.7px;width:4.3px;height:35.8px;background:#2f86e0;"></div>
<div class="t" style="left:467.7px;top:82.52px;font-size:8px;color:#3a3a3a;-webkit-text-stroke:0.12px #3a3a3a;transform-origin:0 0;transform:scaleX(0.93);">Goods Reception</div>
<div class="t" style="left:467.7px;top:91.92px;font-size:8px;color:#3a3a3a;-webkit-text-stroke:0.12px #3a3a3a;transform-origin:0 0;transform:scaleX(0.93);">SSA/315014-1</div>
<div class="t" style="left:539.9px;top:104.42px;font-size:8.2px;color:#222;-webkit-text-stroke:0.3px #222;transform-origin:0 0;transform:scaleX(0.95);">5</div>
<div class="a" style="left:547.9px;top:94.3px;width:12.5px;height:1px;background:#d0d0d0;"></div>
<div class="a" style="left:562.4px;top:76.2px;width:89px;height:36.8px;background:#e2e2e2;border:1px solid #cacaca;"></div>
<div class="a" style="left:563.4px;top:77.2px;width:4.5px;height:34.8px;background:#2f86e0;"></div>
<div class="t" style="left:572.1999999999999px;top:82.52px;font-size:8px;color:#3a3a3a;-webkit-text-stroke:0.12px #3a3a3a;transform-origin:0 0;transform:scaleX(0.93);">Goods Transfer</div>
<div class="t" style="left:572.1999999999999px;top:91.92px;font-size:8px;color:#3a3a3a;-webkit-text-stroke:0.12px #3a3a3a;transform-origin:0 0;transform:scaleX(0.93);">STW/100654</div>
<div class="t" style="left:644.4px;top:104.42px;font-size:8.2px;color:#222;-webkit-text-stroke:0.3px #222;transform-origin:0 0;transform:scaleX(0.95);">1</div>
<div class="a" style="left:652.4px;top:94.3px;width:13.3px;height:1px;background:#d0d0d0;"></div>
<div class="a" style="left:667.7px;top:76.7px;width:87px;height:35.8px;background:#e2e2e2;"></div>
<div class="a" style="left:667.7px;top:76.7px;width:4.3px;height:35.8px;background:#1c14c4;"></div>
<div class="t" style="left:676.5px;top:82.52px;font-size:8px;color:#3a3a3a;-webkit-text-stroke:0.12px #3a3a3a;transform-origin:0 0;transform:scaleX(0.93);">Purchase Order</div>
<div class="t" style="left:676.5px;top:91.92px;font-size:8px;color:#3a3a3a;-webkit-text-stroke:0.12px #3a3a3a;transform-origin:0 0;transform:scaleX(0.93);">SPO/106827-1</div>
<div class="t" style="left:748.7px;top:104.42px;font-size:8.2px;color:#222;-webkit-text-stroke:0.3px #222;transform-origin:0 0;transform:scaleX(0.95);">1</div>
<div class="a" style="left:756.7px;top:94.3px;width:13.7px;height:1px;background:#d0d0d0;"></div>
<div class="a" style="left:772.4px;top:76.7px;width:87px;height:35.8px;background:#e2e2e2;"></div>
<div class="a" style="left:772.4px;top:76.7px;width:4.3px;height:35.8px;background:#2f86e0;"></div>
<div class="t" style="left:781.1999999999999px;top:82.52px;font-size:8px;color:#3a3a3a;-webkit-text-stroke:0.12px #3a3a3a;transform-origin:0 0;transform:scaleX(0.93);">Order Response</div>
<div class="t" style="left:781.1999999999999px;top:91.92px;font-size:8px;color:#3a3a3a;-webkit-text-stroke:0.12px #3a3a3a;transform-origin:0 0;transform:scaleX(0.93);">SOA/103654-1</div>
<div class="t" style="left:853.4px;top:104.42px;font-size:8.2px;color:#222;-webkit-text-stroke:0.3px #222;transform-origin:0 0;transform:scaleX(0.95);">1</div>
<div class="a" style="left:1003.5px;top:114.5px;width:9.5px;height:10px;background:#eeeeee;"></div>
<svg width="10" height="10" style="left:1003.5px;top:114.5px"><path d="M2.5,2.5 L4.75,4.5 L7,2.5 M2.5,5.5 L4.75,7.5 L7,5.5" stroke="#888" stroke-width="1" fill="none"/></svg>
<div class="a" style="left:440px;top:129.4px;width:573.6px;height:17px;background:linear-gradient(#f8f8f8,#e8e8e8);"></div>
<div class="t" style="left:447.8px;top:133.75px;font-size:9.7px;color:#3a3a3a;-webkit-text-stroke:0.35px #3a3a3a;transform-origin:0 0;transform:scaleX(0.88);">General</div>
<div class="a" style="left:440px;top:146.2px;width:573.6px;height:1.8px;background:#d27a40;"></div>
<div class="a" style="left:444px;top:153px;width:130.5px;height:110.6px;background:#d7d7d7;border-radius:4px;overflow:hidden"><div class="a" style="left:0;top:0;width:131px;height:39.2px;background:#e3e3e3"></div></div>
<div class="t" style="left:450.9px;top:157.10px;font-size:9.6px;color:#606060;transform-origin:0 0;transform:scaleX(0.85);">From location</div>
<svg width="8" height="8" style="left:502px;top:158.60px"><g transform="scale(1.000)"><rect x="0" y="0" width="6.8" height="6.8" rx="1.3" fill="#222"/><path d="M1.7,5.1 L4.7,2.1 M2.4,1.9 H4.9 V4.4" stroke="#e3e3e3" stroke-width="1.1" fill="none"/></g></svg>
<div class="t" style="left:450.9px;top:170.10px;font-size:9.6px;color:#3a3a3a;-webkit-text-stroke:0.22px #3a3a3a;transform-origin:0 0;transform:scaleX(0.89);">VAT</div>
<div class="a" style="left:450.4px;top:181.8px;width:102px;height:1px;background:#c2c2c2;"></div>
<div class="t" style="left:450.8px;top:196.30px;font-size:9.6px;color:#606060;transform-origin:0 0;transform:scaleX(0.85);">To location</div>
<svg width="8" height="8" style="left:491.5px;top:197.80px"><g transform="scale(1.000)"><rect x="0" y="0" width="6.8" height="6.8" rx="1.3" fill="#222"/><path d="M1.7,5.1 L4.7,2.1 M2.4,1.9 H4.9 V4.4" stroke="#d7d7d7" stroke-width="1.1" fill="none"/></g></svg>
<div class="t" style="left:450.8px;top:209.20px;font-size:9.6px;color:#3a3a3a;-webkit-text-stroke:0.22px #3a3a3a;transform-origin:0 0;transform:scaleX(0.89);">RAG</div>
<div class="a" style="left:450.8px;top:220.6px;width:114.6px;height:1px;background:#bdbdbd;"></div>
<div class="t" style="left:450.8px;top:232.10px;font-size:9.6px;color:#444;transform-origin:0 0;transform:scaleX(0.85);">Raglamyr</div>
<div class="t" style="left:450.8px;top:243.80px;font-size:9.6px;color:#444;transform-origin:0 0;transform:scaleX(0.85);">5536 HAUGESUND, Norway</div>
<div class="t" style="left:592.1px;top:154.60px;font-size:9.6px;color:#606060;transform-origin:0 0;transform:scaleX(0.85);">Send document by</div>
<div class="t" style="left:592.1px;top:166.10px;font-size:10px;color:#e0701e;-webkit-text-stroke:0.22px #e0701e;transform-origin:0 0;transform:scaleX(0.85);">Edit</div>
<svg width="10" height="10" style="left:611.5px;top:166px"><path d="M0.8,8.6 L1.3,6.2 L6.2,1.3 Q6.9,0.6 7.6,1.3 L8.3,2 Q9,2.7 8.3,3.4 L3.4,8.3 Z" fill="#e0701e"/></svg>
<div class="t" style="left:592px;top:187.60px;font-size:9.6px;color:#606060;transform-origin:0 0;transform:scaleX(0.85);">Delivery terms</div>
<div class="t" style="left:592px;top:201.10px;font-size:9.6px;color:#3a3a3a;-webkit-text-stroke:0.22px #3a3a3a;transform-origin:0 0;transform:scaleX(0.89);">FCA - Free carrier</div>
<svg width="5.6" height="4.8" style="left:712.2px;top:203.6px"><path d="M0,0 H4.6 L2.3,3.8 Z" fill="#222"/></svg>
<div class="a" style="left:592px;top:211.8px;width:131.7px;height:1px;background:repeating-linear-gradient(90deg,#bcbcbc 0 1.4px,transparent 1.4px 3.4px);"></div>
<div class="t" style="left:592px;top:220.70px;font-size:9.6px;color:#606060;transform-origin:0 0;transform:scaleX(0.85);">Departing shipment</div>
<svg width="8" height="8" style="left:665.5px;top:222.20px"><g transform="scale(1.000)"><rect x="0" y="0" width="6.8" height="6.8" rx="1.3" fill="#222"/><path d="M1.7,5.1 L4.7,2.1 M2.4,1.9 H4.9 V4.4" stroke="#fff" stroke-width="1.1" fill="none"/></g></svg>
<div class="t" style="left:592px;top:233.80px;font-size:9.6px;color:#3a3a3a;-webkit-text-stroke:0.22px #3a3a3a;transform-origin:0 0;transform:scaleX(0.89);">SPN/3266100654</div>
<div class="a" style="left:592px;top:245.2px;width:131.3px;height:1.3px;background:#cfcfcf;"></div>
<div class="a" style="left:592px;top:254px;width:11.8px;height:11.8px;background:#fff;border:1.3px solid #e0701e;border-radius:1.5px"></div>
<svg width="12" height="12" style="left:592px;top:254px"><path d="M2.6,6 L5,8.4 L9.4,3.6" stroke="#e0701e" stroke-width="1.3" fill="none"/></svg>
<div class="t" style="left:609.2px;top:255.40px;font-size:9.6px;color:#5a5a5a;transform-origin:0 0;transform:scaleX(0.83);">Require serialnumber to ship</div>
<div class="t" style="left:731.3px;top:187.70px;font-size:9.6px;color:#606060;transform-origin:0 0;transform:scaleX(0.85);">Shipping service</div>
<svg width="8" height="8" style="left:791px;top:189.20px"><g transform="scale(1.000)"><rect x="0" y="0" width="6.8" height="6.8" rx="1.3" fill="#222"/><path d="M1.7,5.1 L4.7,2.1 M2.4,1.9 H4.9 V4.4" stroke="#fff" stroke-width="1.1" fill="none"/></g></svg>
<div class="t" style="left:731.3px;top:200.40px;font-size:9.6px;color:#3a3a3a;-webkit-text-stroke:0.22px #3a3a3a;transform-origin:0 0;transform:scaleX(0.89);">TNT - TNT</div>
<svg width="5.6" height="4.8" style="left:850.6px;top:203.2px"><path d="M0,0 H4.6 L2.3,3.8 Z" fill="#222"/></svg>
<div class="a" style="left:731.3px;top:212.2px;width:130.7px;height:1px;background:repeating-linear-gradient(90deg,#bcbcbc 0 1.4px,transparent 1.4px 3.4px);"></div>
<div class="t" style="left:731.3px;top:220.60px;font-size:9.6px;color:#606060;transform-origin:0 0;transform:scaleX(0.85);">Departing waybill</div>
<svg width="8" height="8" style="left:795.7px;top:222.10px"><g transform="scale(1.000)"><rect x="0" y="0" width="6.8" height="6.8" rx="1.3" fill="#222"/><path d="M1.7,5.1 L4.7,2.1 M2.4,1.9 H4.9 V4.4" stroke="#fff" stroke-width="1.1" fill="none"/></g></svg>
<div class="a" style="left:731.3px;top:244.8px;width:130.7px;height:1.3px;background:#cfcfcf;"></div>
<div class="t" style="left:870.8px;top:154.40px;font-size:9.6px;color:#606060;transform-origin:0 0;transform:scaleX(0.85);">Created at</div>
<div class="t" style="left:870.8px;top:167.10px;font-size:9.6px;color:#3a3a3a;-webkit-text-stroke:0.22px #3a3a3a;transform-origin:0 0;transform:scaleX(0.89);">2019.04.29</div>
<div class="a" style="left:870.8px;top:178.6px;width:130.7px;height:1.3px;background:#cfcfcf;"></div>
<div class="t" style="left:871.2px;top:187.60px;font-size:9.6px;color:#606060;transform-origin:0 0;transform:scaleX(0.85);">Assignee</div>
<svg width="8" height="8" style="left:904.9px;top:189.10px"><g transform="scale(1.000)"><rect x="0" y="0" width="6.8" height="6.8" rx="1.3" fill="#222"/><path d="M1.7,5.1 L4.7,2.1 M2.4,1.9 H4.9 V4.4" stroke="#fff" stroke-width="1.1" fill="none"/></g></svg>
<div class="a" style="left:871.2px;top:202.8px;width:11.6px;height:4.8px;background:#999;"></div>
<div class="t" style="left:886.9px;top:200.60px;font-size:9.6px;color:#3a3a3a;-webkit-text-stroke:0.22px #3a3a3a;transform-origin:0 0;transform:scaleX(0.89);">Kjell</div>
<div class="a" style="left:904px;top:201.4px;width:28px;height:6.8px;background:linear-gradient(90deg,#cfcfcf,#e2e2e2 50%,#d0d0d0);"></div>
<svg width="5.6" height="4.8" style="left:990.3px;top:202.8px"><path d="M0,0 H4.6 L2.3,3.8 Z" fill="#222"/></svg>
<div class="a" style="left:870.8px;top:212.5px;width:130.9px;height:1px;background:repeating-linear-gradient(90deg,#bcbcbc 0 1.4px,transparent 1.4px 3.4px);"></div>
<div class="t" style="left:870.8px;top:220.60px;font-size:9.6px;color:#606060;transform-origin:0 0;transform:scaleX(0.85);">Currency</div>
<div class="t" style="left:870.8px;top:233.10px;font-size:9.6px;color:#3a3a3a;-webkit-text-stroke:0.22px #3a3a3a;transform-origin:0 0;transform:scaleX(0.89);">NOK</div>
<div class="a" style="left:870.8px;top:244.8px;width:130.7px;height:1.3px;background:#cfcfcf;"></div>
<div class="a" style="left:444px;top:317.6px;width:566px;height:151px;border-left:1px solid #e6e6e6;border-right:1px solid #ededed"></div>
<div class="a" style="left:444px;top:317.6px;width:565px;height:17.9px;background:linear-gradient(#f8f8f8,#e8e8e8);"></div>
<div class="t" style="left:452.7px;top:322.95px;font-size:9.7px;color:#3a3a3a;-webkit-text-stroke:0.35px #3a3a3a;transform-origin:0 0;transform:scaleX(0.86);">Product</div>
<div class="a" style="left:444px;top:335.3px;width:565px;height:1.8px;background:#d27a40;"></div>
<div class="t" style="left:452.7px;top:341.60px;font-size:9.6px;color:#606060;transform-origin:0 0;transform:scaleX(0.85);">Quantity</div>
<div class="t" style="left:452.7px;top:354.70px;font-size:9.6px;color:#3a3a3a;-webkit-text-stroke:0.22px #3a3a3a;transform-origin:0 0;transform:scaleX(0.89);">1</div>
<div class="a" style="left:452.7px;top:366.4px;width:176.7px;height:1.3px;background:#cfcfcf;"></div>
<div class="t" style="left:638.6px;top:341.60px;font-size:9.6px;color:#606060;transform-origin:0 0;transform:scaleX(0.85);">Net price/NOK</div>
<div class="t" style="left:638.6px;top:354.70px;font-size:9.6px;color:#3a3a3a;-webkit-text-stroke:0.22px #3a3a3a;transform-origin:0 0;transform:scaleX(0.89);">0.00</div>
<div class="a" style="left:638.6px;top:366.4px;width:176.9px;height:1.3px;background:#cfcfcf;"></div>
<div class="t" style="left:823.5px;top:341.60px;font-size:9.6px;color:#606060;transform-origin:0 0;transform:scaleX(0.85);">Net amount/NOK</div>
<div class="t" style="left:823.5px;top:354.70px;font-size:9.6px;color:#3a3a3a;-webkit-text-stroke:0.22px #3a3a3a;transform-origin:0 0;transform:scaleX(0.89);">0.00</div>
<div class="a" style="left:823.5px;top:366.4px;width:177.5px;height:1.3px;background:#cfcfcf;"></div>
<div class="t" style="left:452.7px;top:374.50px;font-size:9.6px;color:#606060;transform-origin:0 0;transform:scaleX(0.85);">Product</div>
<svg width="8" height="8" style="left:482.7px;top:376.00px"><g transform="scale(1.000)"><rect x="0" y="0" width="6.8" height="6.8" rx="1.3" fill="#222"/><path d="M1.7,5.1 L4.7,2.1 M2.4,1.9 H4.9 V4.4" stroke="#fff" stroke-width="1.1" fill="none"/></g></svg>
<div class="t" style="left:452.7px;top:387.60px;font-size:9.6px;color:#3a3a3a;-webkit-text-stroke:0.22px #3a3a3a;transform-origin:0 0;transform:scaleX(0.89);">801008</div>
<div class="a" style="left:452.7px;top:399.3px;width:176.7px;height:1.3px;background:#cfcfcf;"></div>
<div class="t" style="left:638.6px;top:374.50px;font-size:9.6px;color:#606060;transform-origin:0 0;transform:scaleX(0.85);">Manufacturer</div>
<svg width="8" height="8" style="left:688.6px;top:376.00px"><g transform="scale(1.000)"><rect x="0" y="0" width="6.8" height="6.8" rx="1.3" fill="#222"/><path d="M1.7,5.1 L4.7,2.1 M2.4,1.9 H4.9 V4.4" stroke="#fff" stroke-width="1.1" fill="none"/></g></svg>
<div class="t" style="left:638.6px;top:387.60px;font-size:9.6px;color:#3a3a3a;-webkit-text-stroke:0.22px #3a3a3a;transform-origin:0 0;transform:scaleX(0.89);">MISC</div>
<div class="a" style="left:638.6px;top:399.3px;width:176.9px;height:1.3px;background:#cfcfcf;"></div>
<div class="t" style="left:823.5px;top:374.50px;font-size:9.6px;color:#606060;transform-origin:0 0;transform:scaleX(0.85);">Type</div>
<div class="t" style="left:823.5px;top:387.60px;font-size:9.6px;color:#3a3a3a;-webkit-text-stroke:0.22px #3a3a3a;transform-origin:0 0;transform:scaleX(0.89);">P - Part</div>
<div class="a" style="left:823.5px;top:399.3px;width:177.5px;height:1.3px;background:#cfcfcf;"></div>
<div class="t" style="left:452.7px;top:407.40px;font-size:9.6px;color:#606060;transform-origin:0 0;transform:scaleX(0.85);">Description</div>
<div class="t" style="left:452.7px;top:420.50px;font-size:9.6px;color:#3a3a3a;-webkit-text-stroke:0.22px #3a3a3a;transform-origin:0 0;transform:scaleX(0.89);">Monteringshanske str10 NFTbelegg Classic</div>
<div class="a" style="left:452.7px;top:432.2px;width:235.3px;height:1.3px;background:#cfcfcf;"></div>
<div class="a" style="left:1016px;top:48px;width:8px;height:416px;background:#efefef;"></div>
<div class="a" style="left:1016px;top:48px;width:8px;height:322px;background:#dedede;"></div>
</body></html>
